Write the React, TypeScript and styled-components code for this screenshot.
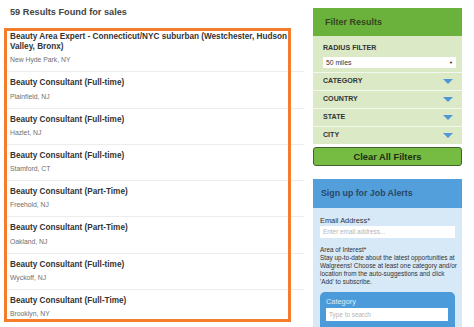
import styled, { createGlobalStyle } from "styled-components";

const GlobalStyle = createGlobalStyle`
  html, body {
    margin: 0;
    padding: 0;
    background: #ffffff;
    font-family: "Liberation Sans", Arial, sans-serif;
  }
`;

const jobs = [
  {
    title: "Beauty Area Expert - Connecticut/NYC suburban (Westchester, Hudson Valley, Bronx)",
    place: "New Hyde Park, NY",
  },
  { title: "Beauty Consultant (Full-time)", place: "Plainfield, NJ" },
  { title: "Beauty Consultant (Full-time)", place: "Hazlet, NJ" },
  { title: "Beauty Consultant (Full-time)", place: "Stamford, CT" },
  { title: "Beauty Consultant (Part-Time)", place: "Freehold, NJ" },
  { title: "Beauty Consultant (Part-Time)", place: "Oakland, NJ" },
  { title: "Beauty Consultant (Full-time)", place: "Wyckoff, NJ" },
  { title: "Beauty Consultant (Full-Time)", place: "Brooklyn, NY" },
];

const filters = ["CATEGORY", "COUNTRY", "STATE", "CITY"];

export default function App() {
  return (
    <Page>
      <GlobalStyle />
      <Results>
        <Heading>59 Results Found for sales</Heading>
        <JobList>
          {jobs.map((job, i) => (
            <JobRow key={i}>
              <JobTitle>{job.title}</JobTitle>
              <JobPlace>{job.place}</JobPlace>
            </JobRow>
          ))}
        </JobList>
        <Highlight />
      </Results>

      <Sidebar>
        <FilterHeader>Filter Results</FilterHeader>
        <FilterPanel>
          <RadiusBlock>
            <FilterLabel>RADIUS FILTER</FilterLabel>
            <FakeSelect>
              <span>50 miles</span>
              <SelectCaret>▼</SelectCaret>
            </FakeSelect>
          </RadiusBlock>
          {filters.map((f) => (
            <FilterRow key={f}>
              <FilterLabel>{f}</FilterLabel>
              <Arrow />
            </FilterRow>
          ))}
        </FilterPanel>
        <ClearButton>Clear All Filters</ClearButton>

        <AlertHeader>Sign up for Job Alerts</AlertHeader>
        <AlertPanel>
          <FieldLabel>Email Address*</FieldLabel>
          <TextBox>Enter email address...</TextBox>
          <Blurb>
            Area of Interest*
            <br />
            Stay up-to-date about the latest opportunities at
            <br />
            Walgreens! Choose at least one category and/or
            <br />
            location from the auto-suggestions and click
            <br />
            'Add' to subscribe.
          </Blurb>
          <CategoryBox>
            <CategoryLabel>Category</CategoryLabel>
            <SearchBox>Type to search</SearchBox>
          </CategoryBox>
        </AlertPanel>
      </Sidebar>
    </Page>
  );
}

const Page = styled.div`
  display: flex;
  width: 474px;
  height: 327px;
  overflow: hidden;
`;

const Results = styled.div`
  position: relative;
  width: 304px;
  flex-shrink: 0;
`;

const Heading = styled.div`
  height: 24px;
  line-height: 24px;
  padding: 0 0 2px 10px;
  font-size: 9.2px;
  font-weight: bold;
  color: #444;
`;

const JobList = styled.div`
  display: flex;
  flex-direction: column;
  padding-left: 6px;
`;

const JobRow = styled.div`
  padding: 6px 0 6px 4px;
  border-top: 1px solid #ececec;

  &:first-child {
    border-top: none;
  }
`;

const JobTitle = styled.div`
  font-size: 8.2px;
  line-height: 10px;
  font-weight: bold;
  color: #333;
  padding-right: 14px;
`;

const JobPlace = styled.div`
  margin-top: 3.3px;
  font-size: 6.8px;
  line-height: 10px;
  color: #6f6f6f;
`;

const Highlight = styled.div`
  position: absolute;
  left: 4px;
  top: 28px;
  width: 281px;
  height: 288px;
  border: 3px solid #f47c2a;
  pointer-events: none;
`;

const Sidebar = styled.div`
  margin-left: 9px;
  width: 149px;
  padding-top: 8px;
  display: flex;
  flex-direction: column;
`;

const FilterHeader = styled.div`
  height: 28px;
  line-height: 28px;
  padding-left: 12px;
  background: #6bb23c;
  color: #34471f;
  font-size: 9px;
  font-weight: bold;
`;

const FilterPanel = styled.div`
  background: #dbe9c7;
  display: flex;
  flex-direction: column;
`;

const RadiusBlock = styled.div`
  height: 36px;
  box-sizing: border-box;
  padding: 7.5px 6px 0 10px;
`;

const FilterLabel = styled.div`
  font-size: 7.1px;
  line-height: 9px;
  font-weight: bold;
  color: #333;
`;

const FakeSelect = styled.div`
  margin-top: 4px;
  height: 11px;
  background: #fff;
  display: flex;
  align-items: center;
  justify-content: space-between;
  padding: 0 3px 0 3px;
  font-size: 6.8px;
  color: #333;
`;

const SelectCaret = styled.span`
  font-size: 4px;
  color: #111;
`;

const FilterRow = styled.div`
  height: 17px;
  border-top: 1px solid #f3f8ec;
  display: flex;
  align-items: center;
  justify-content: space-between;
  padding: 0 9px 0 10px;
`;

const Arrow = styled.div`
  width: 0;
  height: 0;
  border-left: 5px solid transparent;
  border-right: 5px solid transparent;
  border-top: 5px solid #4f97d6;
`;

const ClearButton = styled.div`
  margin-top: 3px;
  height: 21px;
  box-sizing: border-box;
  border: 1px solid #44602a;
  border-radius: 3px;
  background: #76bb42;
  display: flex;
  align-items: center;
  justify-content: center;
  font-size: 9.3px;
  font-weight: bold;
  color: #1d2d10;
`;

const AlertHeader = styled.div`
  margin-top: 13px;
  height: 29px;
  line-height: 29px;
  padding-left: 8px;
  background: #539fdc;
  color: #294766;
  font-size: 8.8px;
  font-weight: bold;
`;

const AlertPanel = styled.div`
  flex: 1;
  background: #d7e8f6;
  padding: 8px 7px 0 7px;
`;

const FieldLabel = styled.div`
  font-size: 7.4px;
  line-height: 10px;
  color: #333;
`;

const TextBox = styled.div`
  height: 12px;
  background: #fff;
  padding-left: 3px;
  font-size: 6.4px;
  line-height: 12px;
  color: #b5b5b5;
`;

const Blurb = styled.div`
  margin-top: 8px;
  font-size: 6.4px;
  line-height: 7.9px;
  color: #333;
  white-space: nowrap;
`;

const CategoryBox = styled.div`
  margin-top: 6px;
  background: #4b9ad9;
  border-radius: 5px 5px 0 0;
  padding: 5px 7px 6px 6px;
`;

const CategoryLabel = styled.div`
  font-size: 7.4px;
  line-height: 10px;
  color: #e0ecf7;
`;

const SearchBox = styled.div`
  margin-top: 1px;
  height: 13px;
  background: #fff;
  padding-left: 3px;
  font-size: 6.4px;
  line-height: 13px;
  color: #b5b5b5;
`;
